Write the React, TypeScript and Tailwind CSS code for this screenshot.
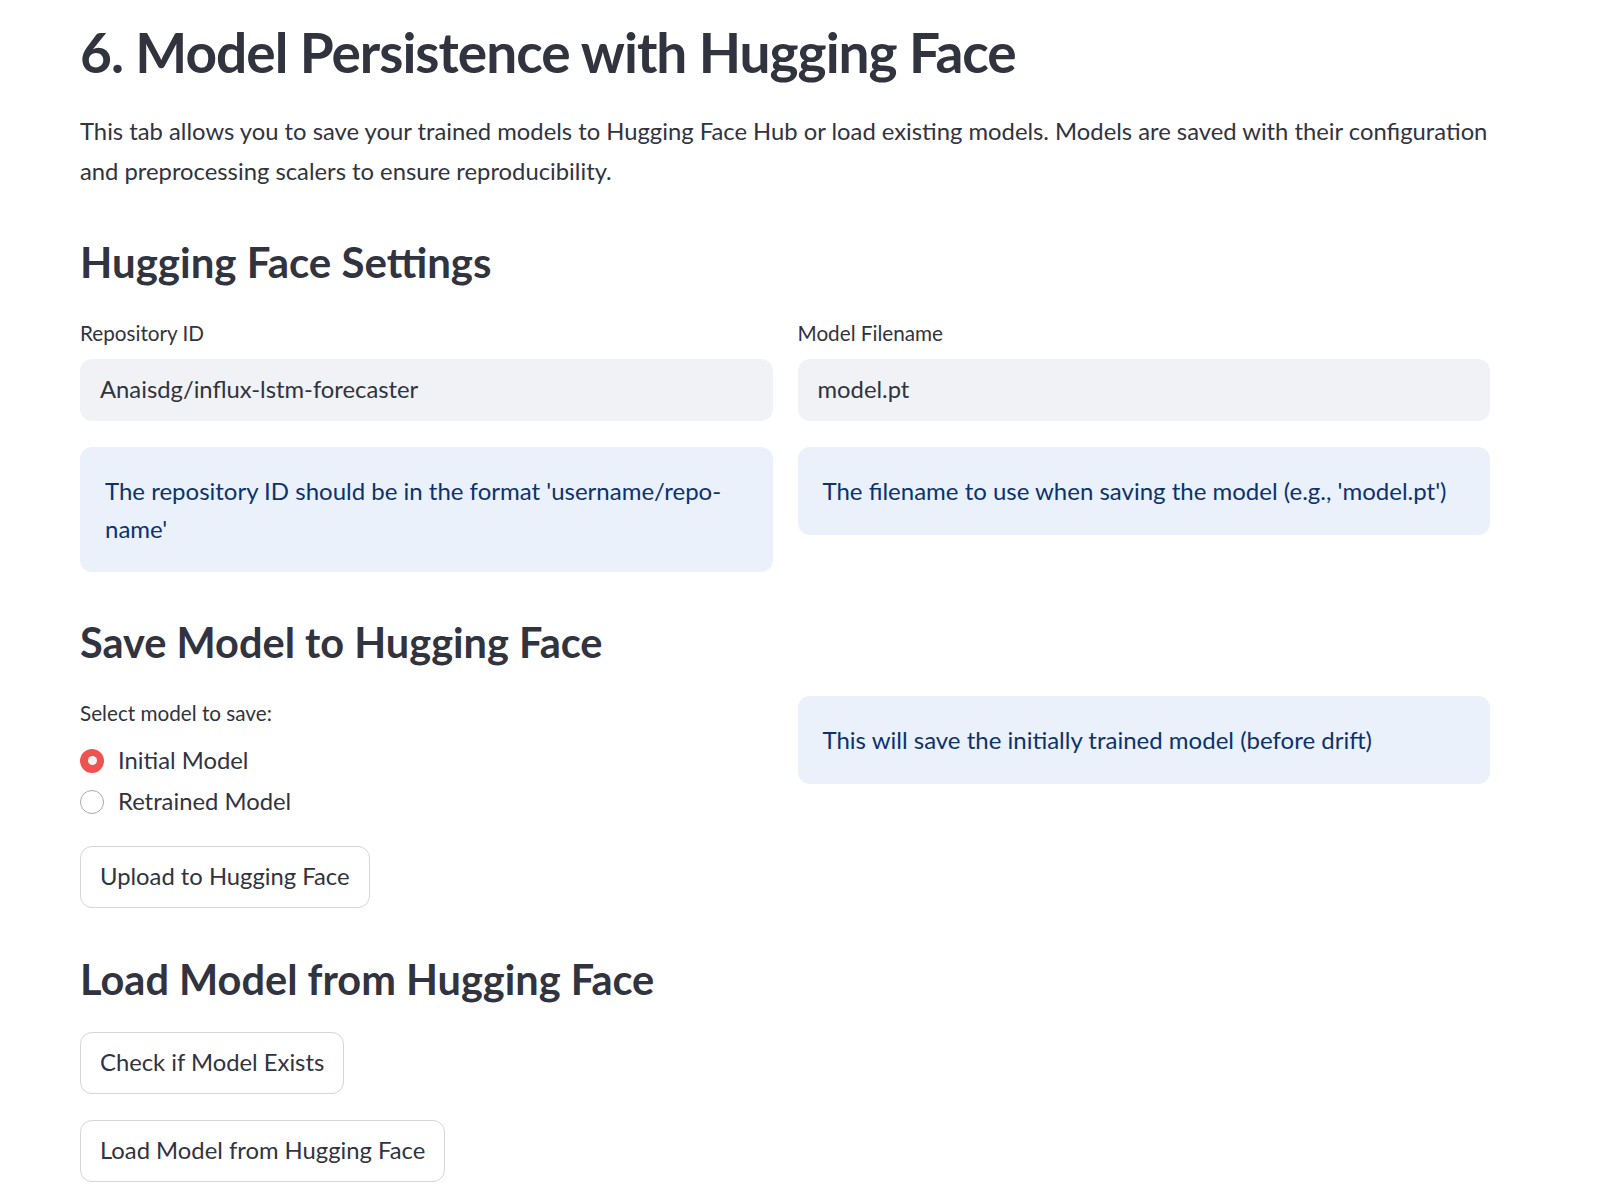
import { useState } from "react";

const font = "font-['Lato','Noto_Sans',sans-serif]";

function InfoBox({ children }: { children: React.ReactNode }) {
    return (
        <div className="rounded-[12px] bg-[#eaf1fb] px-[25px] py-[25px] text-[24px] leading-[37.5px] text-[#0c3270]">
            {children}
        </div>
    );
}

function Button({ label }: { label: string }) {
    return (
        <button className="h-[62px] rounded-[12px] border border-[#d5d6d9] bg-white px-[19px] text-[23.8px] text-[#31333f]">
            {label}
        </button>
    );
}

function TextField({ label, value }: { label: string; value: string }) {
    return (
        <div>
            <div className="mt-[28px] h-[30px] text-[20.7px] leading-[30px]">{label}</div>
            <div className="mt-[11px] flex h-[62px] items-center rounded-[12px] bg-[#f0f2f6] px-[20px] text-[23.8px]">
                {value}
            </div>
        </div>
    );
}

export default function App() {
    const [choice, setChoice] = useState("Initial Model");
    const options = ["Initial Model", "Retrained Model"];

    return (
        <div className={`min-h-[1202px] bg-white pl-[80px] pt-[12px] text-[#31333f] ${font}`}>
            <div className="w-[1410px]">
                <h1 className="text-[55px] font-bold leading-[80px] tracking-[-1px]">6. Model Persistence with Hugging Face</h1>
                <p className="mt-[19px] text-[23.8px] leading-[40px]">
                    This tab allows you to save your trained models to Hugging Face Hub or load existing models. Models are saved with their configuration and preprocessing scalers to ensure reproducibility.
                </p>

                <h2 className="mt-[43px] text-[42px] font-bold leading-[56px]">Hugging Face Settings</h2>
                <div className="grid grid-cols-2 gap-x-[25px]">
                    <div>
                        <TextField label="Repository ID" value="Anaisdg/influx-lstm-forecaster" />
                        <div className="mt-[26px]">
                            <InfoBox>The repository ID should be in the format 'username/repo-name'</InfoBox>
                        </div>
                    </div>
                    <div>
                        <TextField label="Model Filename" value="model.pt" />
                        <div className="mt-[26px]">
                            <InfoBox>The filename to use when saving the model (e.g., 'model.pt')</InfoBox>
                        </div>
                    </div>
                </div>

                <h2 className="mt-[42px] text-[41.5px] font-bold leading-[56px]">Save Model to Hugging Face</h2>
                <div className="mt-[26px] grid grid-cols-2 gap-x-[25px]">
                    <div>
                        <div className="mt-[2px] h-[30px] text-[20.7px] leading-[30px]">Select model to save:</div>
                        <div className="mt-[12px]">
                            {options.map((o) => (
                                <div key={o} onClick={() => setChoice(o)} className="flex h-[41px] cursor-pointer items-center gap-[14px]">
                                    {choice === o ? (
                                        <span className="flex h-[24px] w-[24px] items-center justify-center rounded-full bg-[#f0524f]">
                                            <span className="h-[9px] w-[9px] rounded-full bg-[#f0f2f6]" />
                                        </span>
                                    ) : (
                                        <span className="h-[24px] w-[24px] rounded-full border-[1.5px] border-[#a9aaae] bg-white" />
                                    )}
                                    <span className="text-[23.8px]">{o}</span>
                                </div>
                            ))}
                        </div>
                        <div className="mt-[24px]">
                            <Button label="Upload to Hugging Face" />
                        </div>
                    </div>
                    <div>
                        <InfoBox>This will save the initially trained model (before drift)</InfoBox>
                    </div>
                </div>

                <h2 className="mt-[43px] text-[41.5px] font-bold leading-[56px]">Load Model from Hugging Face</h2>
                <div className="mt-[25px] flex flex-col items-start gap-[26px]">
                    <Button label="Check if Model Exists" />
                    <Button label="Load Model from Hugging Face" />
                </div>
            </div>
        </div>
    );
}
